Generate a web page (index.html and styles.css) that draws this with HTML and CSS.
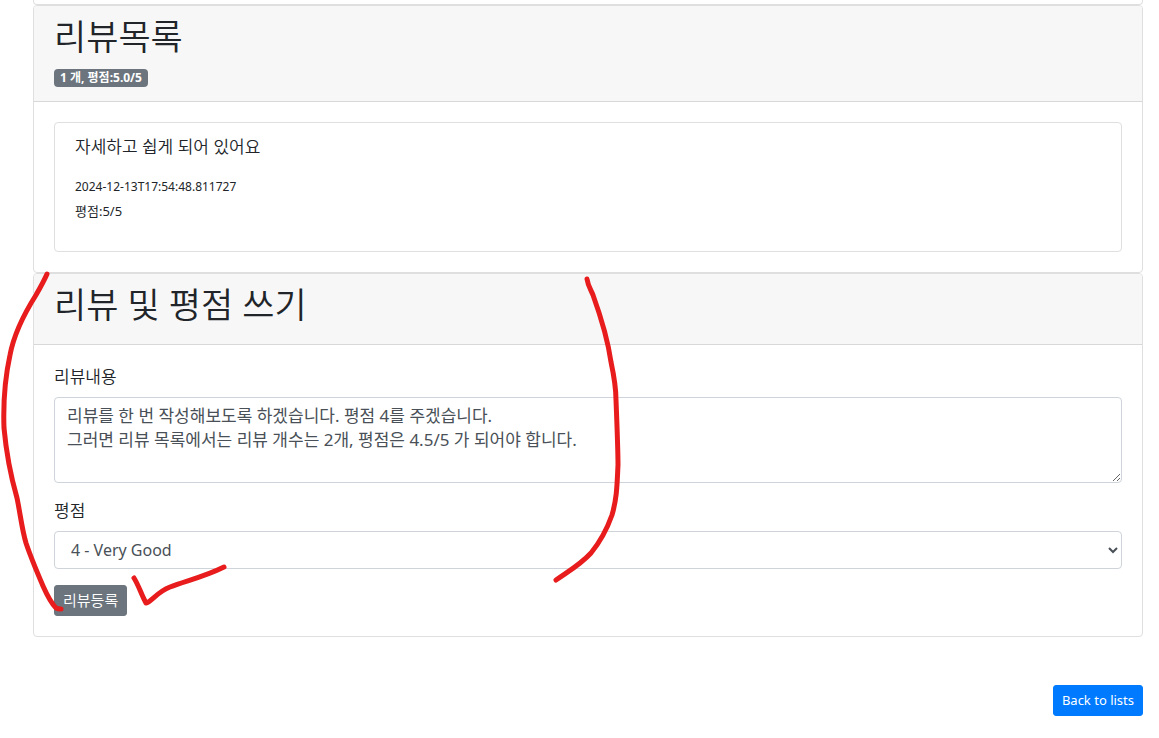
FILE: index.html
```html
<!DOCTYPE html>
<html lang="ko">
<head>
<meta charset="utf-8">
<meta name="viewport" content="width=device-width, initial-scale=1">
<title>리뷰목록</title>
<link rel="stylesheet" href="styles.css">
</head>
<body>
<main class="page">
  <div class="card card-end"></div>

  <section class="card">
    <header class="card-header">
      <h2 class="card-title">리뷰목록</h2>
      <div class="badge-row"><span class="badge">1 개, 평점:5.0/5</span></div>
    </header>
    <div class="card-body">
      <article class="card review">
        <p class="review-text">자세하고 쉽게 되어 있어요</p>
        <p class="review-meta">
          <time class="review-time">2024-12-13T17:54:48.811727</time>
          <span>평점:5/5</span>
        </p>
      </article>
    </div>
  </section>

  <section class="card">
    <header class="card-header">
      <h2 class="card-title">리뷰 및 평점 쓰기</h2>
    </header>
    <form class="card-body">
      <div class="form-group">
        <label class="label" for="content">리뷰내용</label>
        <textarea class="control" id="content" rows="3" spellcheck="false">리뷰를 한 번 작성해보도록 하겠습니다. 평점 4를 주겠습니다.
그러면 리뷰 목록에서는 리뷰 개수는 2개, 평점은 4.5/5 가 되어야 합니다.</textarea>
      </div>
      <div class="form-group">
        <label class="label" for="rating">평점</label>
        <select class="control select" id="rating">
          <option>4 - Very Good</option>
        </select>
      </div>
      <button class="btn btn-secondary" type="button">리뷰등록</button>
    </form>
  </section>

  <div class="actions"><a class="btn btn-primary" href="#">Back to lists</a></div>

  <svg class="ink" width="640" height="620" viewBox="0 0 640 620" aria-hidden="true">
    <path d="M47 274C44 281 40 288 36 295C24 314 14 334 10 355C5 378 3 400 4 428C6 450 9 470 17 498C20 512 22 530 26 543C31 558 37 572 43 586C47 595 52 604 56 608C58 609 59 609 61 609"/>
    <path d="M587 279C588 286 591 290 593 295C602 320 608 341 611 362C614 376 616 387 616 400C617 425 618 450 618 465C617 485 617 498 612 515C607 529 600 542 591 553C581 564 572 569 556 580"/>
    <path d="M134 578C139 586 141 594 146 603C151 602 157 592 170 587C185 581 204 577 224 567"/>
  </svg>
</main>
</body>
</html>
```
FILE: styles.css
```css
* {
  box-sizing: border-box;
}

body {
  margin: 0;
  background: #fff;
  color: #212529;
  font: 16px/24px "Noto Sans", "Noto Sans CJK KR", sans-serif;
}

.page {
  position: relative;
  padding: 0 16px 22px 33px;
}

.card {
  border: 1px solid #dfdfdf;
  border-radius: 4px;
  background: #fff;
}

.card-end {
  height: 5px;
  border-top: 0;
  border-radius: 0 0 4px 4px;
}

.card-header {
  padding: 12px 20px;
  border-bottom: 1px solid #d8d8d8;
  border-radius: 3px 3px 0 0;
  background: #f7f7f7;
}

.card-title {
  margin: 0 0 8px;
  font-size: 35px;
  font-weight: 350;
  line-height: 38px;
}

.badge-row {
  display: flex;
  align-items: flex-end;
  height: 25px;
  padding-bottom: 2px;
}

.badge {
  padding: 3px 6px;
  border-radius: 4px;
  background: #6c757d;
  color: #fff;
  font-size: 12px;
  font-weight: 700;
  line-height: 12px;
}

.card-body {
  padding: 20px;
}

.review {
  padding: 12px 20px;
}

.review-text {
  margin: 0 0 16px;
  font-size: 17px;
  font-weight: 350;
}

.review-meta {
  display: flex;
  flex-direction: column;
  margin: 0 0 16px;
  font-size: 13px;
}

.review-time {
  font-size: 12px;
}

.form-group {
  display: flex;
  flex-direction: column;
  gap: 8px;
  margin-bottom: 16px;
}

.label {
  font-size: 17px;
  font-weight: 350;
}

.control {
  display: block;
  width: 100%;
  padding: 6px 12px;
  border: 1px solid #ced4da;
  border-radius: 4px;
  background: #fff;
  color: #495057;
  font: 17px/24px "Noto Sans", "Noto Sans CJK KR", sans-serif;
}

textarea.control {
  overflow: auto;
  resize: vertical;
}

.select {
  height: 38px;
  font-size: 16px;
}

.btn {
  display: inline-block;
  padding: 4px 8px;
  border: 1px solid;
  border-radius: 3px;
  color: #fff;
  font: 13px/21px "Noto Sans", "Noto Sans CJK KR", sans-serif;
  text-decoration: none;
}

.btn-secondary {
  display: block;
  border-color: #6c757d;
  background: #6c757d;
  font-size: 15px;
  font-weight: 350;
}

.btn-primary {
  border-color: #007bff;
  background: #007bff;
}

.actions {
  display: flex;
  justify-content: flex-end;
  margin-top: 48px;
}

.ink {
  position: absolute;
  top: 0;
  left: 0;
  fill: none;
  stroke: #e81c1c;
  stroke-width: 5px;
  stroke-linecap: round;
  stroke-linejoin: round;
  pointer-events: none;
}
```
